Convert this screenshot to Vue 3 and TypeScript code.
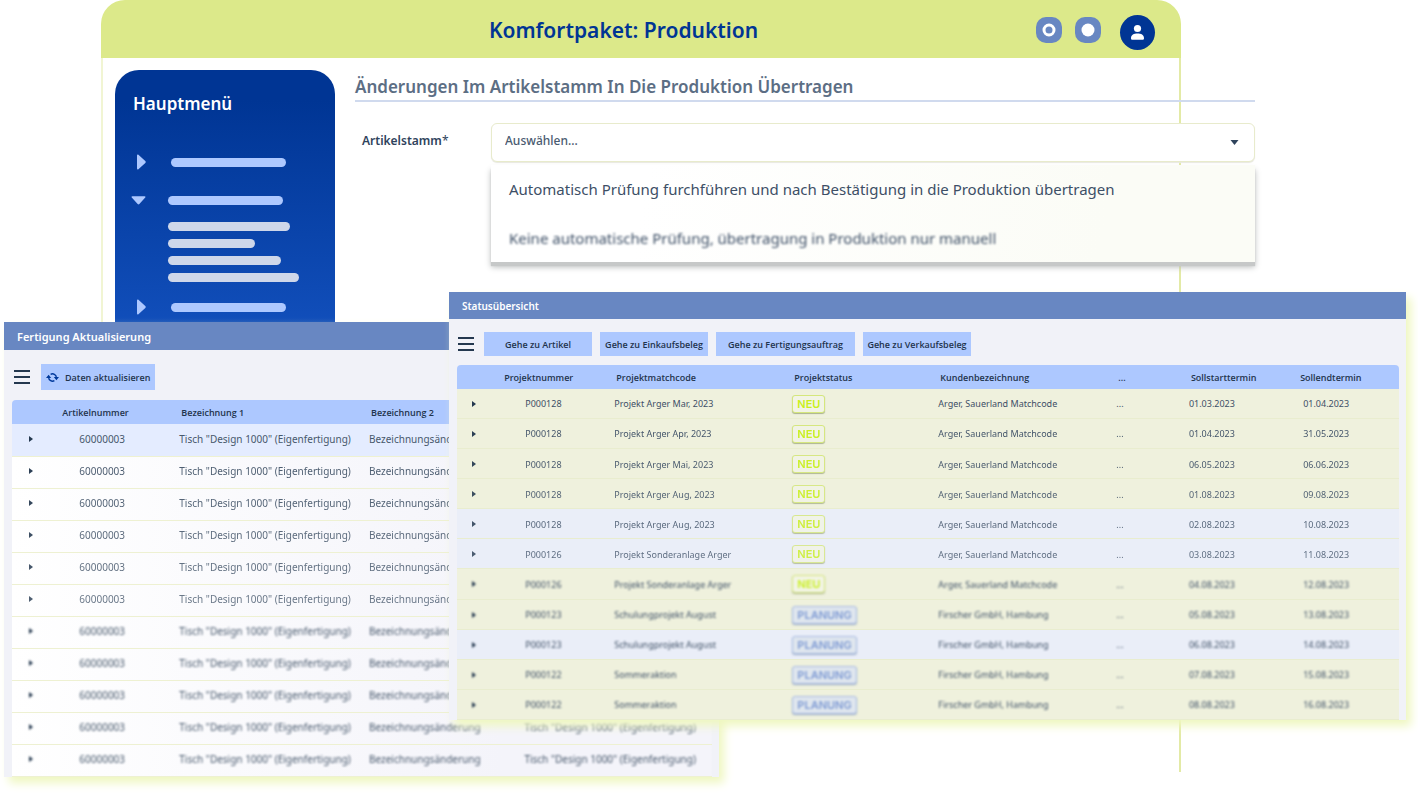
<script setup lang="ts">
import { ref } from 'vue'

interface MenuEntry {
  open: boolean
  children: string[]
}

interface Project {
  nr: string
  name: string
  status: 'NEU' | 'PLANUNG'
  customer: string
  start: string
  end: string
  blue?: boolean
}

const menu: MenuEntry[] = [
  { open: false, children: [] },
  { open: true, children: ['w-l', 'w-s', 'w-m', 'w-xl'] },
  { open: false, children: [] },
]

const options: string[] = [
  'Automatisch Prüfung furchführen und nach Bestätigung in die Produktion übertragen',
  'Keine automatische Prüfung, übertragung in Produktion nur manuell',
]
const selected = ref('')

const articleName = 'Tisch "Design 1000" (Eigenfertigung)'
const articles = Array.from({ length: 11 }, (_, i) => ({
  nr: '60000003',
  name: articleName,
  name2: 'Bezeichnungsänderung',
  parent: i > 8 ? articleName : '',
}))

const arger = 'Arger, Sauerland Matchcode'
const firscher = 'Firscher GmbH, Hambung'
const projects: Project[] = [
  { nr: 'P000128', name: 'Projekt Arger Mar, 2023', status: 'NEU', customer: arger, start: '01.03.2023', end: '01.04.2023' },
  { nr: 'P000128', name: 'Projekt Arger Apr, 2023', status: 'NEU', customer: arger, start: '01.04.2023', end: '31.05.2023' },
  { nr: 'P000128', name: 'Projekt Arger Mai, 2023', status: 'NEU', customer: arger, start: '06.05.2023', end: '06.06.2023' },
  { nr: 'P000128', name: 'Projekt Arger Aug, 2023', status: 'NEU', customer: arger, start: '01.08.2023', end: '09.08.2023' },
  { nr: 'P000128', name: 'Projekt Arger Aug, 2023', status: 'NEU', customer: arger, start: '02.08.2023', end: '10.08.2023', blue: true },
  { nr: 'P000126', name: 'Projekt Sonderanlage Arger', status: 'NEU', customer: arger, start: '03.08.2023', end: '11.08.2023', blue: true },
  { nr: 'P000126', name: 'Projekt Sonderanlage Arger', status: 'NEU', customer: arger, start: '04.08.2023', end: '12.08.2023' },
  { nr: 'P000123', name: 'Schulungprojekt August', status: 'PLANUNG', customer: firscher, start: '05.08.2023', end: '13.08.2023' },
  { nr: 'P000123', name: 'Schulungprojekt August', status: 'PLANUNG', customer: firscher, start: '06.08.2023', end: '14.08.2023', blue: true },
  { nr: 'P000122', name: 'Sommeraktion', status: 'PLANUNG', customer: firscher, start: '07.08.2023', end: '15.08.2023' },
  { nr: 'P000122', name: 'Sommeraktion', status: 'PLANUNG', customer: firscher, start: '08.08.2023', end: '16.08.2023' },
]

const links: string[] = ['Gehe zu Artikel', 'Gehe zu Einkaufsbeleg', 'Gehe zu Fertigungsauftrag', 'Gehe zu Verkaufsbeleg']

// Rows fade out of focus toward the bottom of each list.
const focus = (index: number) => ({
  filter: index < 6 ? 'none' : 'blur(1px)',
  opacity: index < 6 ? 1 - index * 0.04 : 1,
})
</script>

<template>
  <div class="stage">
    <section class="app-frame">
      <header class="app-header">
        <h1>Komfortpaket: Produktion</h1>
        <div class="header-actions">
          <button type="button" class="dot-button">
            <svg viewBox="0 0 26 26"><circle cx="13" cy="13" r="5" fill="none" stroke="#fff" stroke-width="3" /></svg>
          </button>
          <button type="button" class="dot-button">
            <svg viewBox="0 0 26 26"><circle cx="13" cy="13" r="6.5" fill="#fff" /></svg>
          </button>
          <button type="button" class="avatar">
            <svg viewBox="0 0 35 35" fill="#fff">
              <circle cx="17.5" cy="13.5" r="3.6" />
              <path d="M11 23.2c0-3.2 3-4.600 6.500-4.600s6.500 1.400 6.500 4.600c0 1-.6 1.600-1.600 1.600h-9.800c-1 0-1.600-.6-1.600-1.600z" />
            </svg>
          </button>
        </div>
      </header>

      <div class="app-body">
        <nav class="sidebar">
          <h2>Hauptmenü</h2>
          <ul>
            <li v-for="(entry, i) in menu" :key="i" :class="{ open: entry.open }">
              <button type="button" class="menu-row">
                <svg v-if="entry.open" class="tri-down" viewBox="0 0 16 9"><path d="M1.500 0h13c1 0 1.300.8.700 1.400l-6.300 6.900c-.5.6-1.300.6-1.800 0L.800 1.400C.2.800.5 0 1.500 0z" fill="#adc8ff" /></svg>
                <svg v-else class="tri-right" viewBox="0 0 9 16"><path d="M0 1.500v13c0 1 .8 1.300 1.400.7l6.900-6.300c.6-.5.600-1.300 0-1.800L1.400.8C.8.2 0 .5 0 1.500z" fill="#adc8ff" /></svg>
                <span class="pill"></span>
              </button>
              <div v-if="entry.children.length" class="submenu">
                <span v-for="c in entry.children" :key="c" class="subpill" :class="c"></span>
              </div>
            </li>
          </ul>
        </nav>

        <main class="content">
          <h2>Änderungen Im Artikelstamm In Die Produktion Übertragen</h2>
          <div class="field">
            <label for="artikelstamm">Artikelstamm<span>*</span></label>
            <div class="combo">
              <div class="select-wrap">
                <select id="artikelstamm" v-model="selected">
                  <option value="">Auswählen...</option>
                  <option v-for="o in options" :key="o" :value="o">{{ o }}</option>
                </select>
                <svg class="caret" viewBox="0 0 8 5"><path d="M0 0h8L4 5z" fill="#2f435c" /></svg>
              </div>
              <ul class="option-list" role="listbox">
                <li v-for="(o, i) in options" :key="o" role="option" :class="{ soft: i > 0 }" @click="selected = o">{{ o }}</li>
              </ul>
            </div>
          </div>
        </main>
      </div>
    </section>

    <section class="window production">
      <h2 class="titlebar">Fertigung Aktualisierung</h2>
      <div class="toolbar">
        <button type="button" class="burger">
          <svg viewBox="0 0 16 14" stroke="#24384f" stroke-width="2"><path d="M0 1h16M0 7h16M0 13h16" /></svg>
        </button>
        <button type="button" class="tool refresh">
          <svg viewBox="0 0 24 20">
            <path d="M8.500 4.200A7.200 7.200 0 0 1 19.200 10M15.500 15.800A7.200 7.200 0 0 1 4.800 10" fill="none" stroke="#00399b" stroke-width="2.600" />
            <path d="M0 11l4.800-6 4.800 6zM14.400 9h9.600l-4.800 6z" fill="#00399b" />
          </svg>
          Daten aktualisieren
        </button>
      </div>
      <div class="table-box">
        <table class="articles">
          <colgroup><col class="a1" /><col class="a2" /><col class="a3" /><col class="a4" /><col /></colgroup>
          <thead>
            <tr><th></th><th>Artikelnummer</th><th>Bezeichnung 1</th><th>Bezeichnung 2</th><th></th></tr>
          </thead>
          <tbody>
            <tr v-for="(a, i) in articles" :key="i">
              <td class="toggle"><svg :style="focus(i)" viewBox="0 0 4 6"><path d="M0 0l4 3-4 3z" fill="#24384f" /></svg></td>
              <td class="nr"><span :style="focus(i)">{{ a.nr }}</span></td>
              <td><span :style="focus(i)">{{ a.name }}</span></td>
              <td><span :style="focus(i)">{{ a.name2 }}</span></td>
              <td><span :style="focus(i)">{{ a.parent }}</span></td>
            </tr>
          </tbody>
        </table>
      </div>
    </section>

    <section class="window status">
      <h2 class="titlebar">Statusübersicht</h2>
      <div class="toolbar">
        <button type="button" class="burger">
          <svg viewBox="0 0 16 14" stroke="#24384f" stroke-width="2"><path d="M0 1h16M0 7h16M0 13h16" /></svg>
        </button>
        <button v-for="(l, i) in links" :key="l" type="button" class="tool" :class="{ wide: i === 2 }">{{ l }}</button>
      </div>
      <div class="table-box">
        <table class="projects">
          <colgroup>
            <col class="p1" /><col class="p2" /><col class="p3" /><col class="p4" /><col class="p5" /><col class="p6" /><col class="p7" /><col />
          </colgroup>
          <thead>
            <tr>
              <th></th><th>Projektnummer</th><th>Projektmatchcode</th><th>Projektstatus</th>
              <th>Kundenbezeichnung</th><th>...</th><th>Sollstarttermin</th><th>Sollendtermin</th>
            </tr>
          </thead>
          <tbody>
            <tr v-for="(p, i) in projects" :key="i" :class="{ blue: p.blue }">
              <td class="toggle"><svg :style="focus(i)" viewBox="0 0 4 6"><path d="M0 0l4 3-4 3z" fill="#24384f" /></svg></td>
              <td class="nr"><span :style="focus(i)">{{ p.nr }}</span></td>
              <td><span :style="focus(i)">{{ p.name }}</span></td>
              <td><span class="badge" :class="p.status.toLowerCase()" :style="focus(i)">{{ p.status }}</span></td>
              <td><span :style="focus(i)">{{ p.customer }}</span></td>
              <td><span :style="focus(i)">...</span></td>
              <td><span :style="focus(i)">{{ p.start }}</span></td>
              <td class="end"><span :style="focus(i)">{{ p.end }}</span></td>
            </tr>
          </tbody>
        </table>
      </div>
    </section>
  </div>
</template>

<style>
body {
  margin: 0;
  background: #fff;
}
</style>

<style scoped>
.stage {
  position: relative;
  min-height: 100vh;
  overflow: hidden;
  font-family: 'Noto Sans', 'Open Sans', sans-serif;
  color: #2f435c;
}
.stage * {
  box-sizing: border-box;
}
h1, h2, ul {
  margin: 0;
  padding: 0;
  list-style: none;
  font-weight: 600;
}
button {
  padding: 0;
  border: 0;
  background: none;
  font: inherit;
  color: inherit;
  cursor: pointer;
}
svg {
  display: block;
}

/* application frame */
.app-frame {
  position: absolute;
  top: 0;
  bottom: 22px;
  left: 101px;
  right: 237px;
  display: flex;
  flex-direction: column;
}
.app-header {
  display: flex;
  align-items: center;
  height: 58px;
  padding: 0 26px 0 110px;
  border-radius: 24px 24px 0 0;
  background: #dce98a;
}
.app-header h1 {
  flex: 1;
  text-align: center;
  font-size: 21px;
  line-height: 32px;
  padding-top: 2px;
  color: #003594;
}
.header-actions {
  display: flex;
  align-items: center;
  gap: 13px;
  padding-top: 6px;
}
.dot-button {
  width: 26px;
  height: 26px;
  margin-bottom: 4px;
  border-radius: 10px;
  background: #6887c2;
}
.avatar {
  width: 35px;
  height: 35px;
  margin-left: 6px;
  border-radius: 50%;
  background: #003594;
}
.app-body {
  flex: 1;
  display: flex;
  align-items: flex-start;
  gap: 20px;
  padding: 12px 0 0 12px;
  border: solid #e3eaa6;
  border-width: 0 2px;
  border-left-color: #f1f5d3;
}
.sidebar {
  flex: none;
  width: 220px;
  height: 300px;
  padding: 20px 18px;
  border-radius: 24px 24px 0 0;
  background: linear-gradient(#003594 10%, #1250bd 90%);
}
.sidebar h2 {
  font-size: 17px;
  line-height: 28px;
  color: #fff;
  margin-bottom: 36px;
}
.menu-row {
  display: flex;
  align-items: center;
  height: 16px;
  gap: 25px;
  padding-left: 4px;
}
.open .menu-row {
  margin: 22px 0 0 -2px;
  gap: 22px;
  padding-left: 0;
}
.tri-right {
  width: 9px;
  height: 16px;
}
.tri-down {
  width: 15px;
  height: 9px;
}
.pill,
.subpill {
  display: block;
  width: 115px;
  height: 9px;
  border-radius: 5px;
  background: #adc8ff;
}
.submenu {
  display: grid;
  gap: 8px;
  padding: 14px 0 17px 35px;
}
.subpill {
  background: #ced7ea;
}
.w-s { width: 87px; }
.w-m { width: 113px; }
.w-l { width: 122px; }
.w-xl { width: 131px; }

.content {
  flex: 1;
  margin-right: -76px;
}
.content h2 {
  height: 32px;
  font-size: 17px;
  line-height: 33px;
  white-space: nowrap;
  color: #5c6e84;
  border-bottom: 2px solid #d0daee;
}
.field {
  display: flex;
  padding: 21px 0 0 7px;
}
.field label {
  flex: none;
  width: 129px;
  font-size: 12px;
  line-height: 36px;
  font-weight: 600;
}
.field label span {
  font-weight: 400;
}
.combo {
  flex: 1;
}
.select-wrap {
  position: relative;
}
select {
  display: block;
  width: 100%;
  height: 39px;
  padding: 0 13px 4px;
  border: 1px solid #e8ebcc;
  border-radius: 6px;
  appearance: none;
  background: #fff;
  box-shadow: 0 1px 1px #e8e8e0;
  font: 500 12px 'Noto Sans', sans-serif;
  color: #4a5b70;
}
.caret {
  position: absolute;
  right: 16px;
  top: 17px;
  width: 9px;
  height: 5px;
}
.option-list {
  margin-top: 3px;
  height: 97px;
  background: linear-gradient(100deg, #fff 20%, #fbfcf6 80%);
  box-shadow: 0 4px 1px #c6c8c8, 0 5px 6px #b9bcbc;
}
.option-list li {
  height: 49px;
  padding-left: 18px;
  font-size: 15px;
  line-height: 49px;
  font-weight: 400;
  white-space: nowrap;
  color: #3d4f66;
}
.option-list .soft {
  filter: blur(1px);
}

/* windows */
.window {
  position: absolute;
  background: #f1f2f8;
  box-shadow: 5px 6px 9px #eff7c0;
}
.titlebar {
  background: #6887c2;
  color: #fff;
}
.toolbar {
  display: flex;
  align-items: center;
}
.burger {
  width: 16px;
  height: 14px;
}
.tool {
  background: #adc8ff;
  color: #1f344d;
  font-weight: 600;
  font-family: 'Open Sans', 'Noto Sans', sans-serif;
  white-space: nowrap;
}
table {
  width: 100%;
  border-collapse: collapse;
  table-layout: fixed;
}
th,
td {
  padding: 0;
  text-align: left;
  white-space: nowrap;
}
th {
  background: #adc8ff;
  font-weight: 600;
  font-family: 'Open Sans', 'Noto Sans', sans-serif;
  color: #1f344d;
  padding-left: 2px;
}
th:first-child { border-top-left-radius: 4px; }
th:last-child { border-top-right-radius: 4px; }
td span {
  display: inline-block;
}
.toggle svg {
  width: 4px;
  height: 6px;
  margin-left: 17px;
}

.production {
  top: 322px;
  left: 4px;
  right: calc(100% - 719px);
}
.production .titlebar {
  padding: 1px 0 0 13px;
  font-size: 11px;
  line-height: 27px;
}
.production .toolbar {
  height: 50px;
  gap: 11px;
  padding: 4px 0 0 10px;
}
.refresh {
  display: flex;
  align-items: center;
  gap: 6px;
  height: 26px;
  padding: 0 5px;
  font-size: 9px;
}
.refresh svg {
  width: 13px;
  height: 11px;
}
.production .table-box {
  padding: 0 7px 0 8px;
}
.articles {
  font-size: 10px;
}
.articles th {
  height: 24px;
  font-size: 9px;
}
.articles td {
  height: 32px;
  padding-bottom: 2px;
  border-bottom: 1px solid #eef1d2;
  color: #47586c;
}
.articles tbody tr {
  background: linear-gradient(90deg, #fff, #f4f4fa 70%);
}
.articles tbody tr:first-child {
  background: #e4ecff;
}
.articles .nr { padding-left: 19px; }
.a1 { width: 6.9%; }
.a2 { width: 17%; }
.a3 { width: 27.1%; }
.a4 { width: 22.2%; }

.status {
  top: 292px;
  left: 449px;
  right: 12px;
}
.status .titlebar {
  padding: 1px 0 0 13px;
  font-size: 10px;
  line-height: 26px;
}
.status .toolbar {
  height: 46px;
  gap: 8px;
  padding: 4px 0 0 9px;
}
.status .burger {
  margin-right: 2px;
}
.status .tool {
  width: 108px;
  height: 24px;
  font-size: 9px;
}
.status .wide {
  width: 139px;
}
.status .table-box {
  padding: 0 7px 0 8px;
}
.projects {
  height: 355px;
  font-size: 9px;
}
.projects th {
  height: 24px;
  font-size: 9px;
}
.projects td {
  padding-top: 1px;
  border-bottom: 1px solid #e9edcf;
  background: #eff1dd;
  color: #3d4f66;
}
.projects .toggle svg {
  margin-left: 15px;
}
.projects .blue td {
  background: #eaeef8;
}
.projects .nr { padding-left: 23px; }
.projects .end { padding-left: 5px; }
.p1 { width: 4.8%; }
.p2 { width: 11.9%; }
.p3 { width: 18.9%; }
.p4 { width: 15.5%; }
.p5 { width: 18.9%; }
.p6 { width: 7.7%; }
.p7 { width: 11.6%; }
.badge {
  padding: 0 4px;
  border: 1px solid;
  border-radius: 3px;
  font: 600 11px/16px Inter, sans-serif;
  vertical-align: middle;
}
.neu {
  color: #c9f01c;
  border-color: #d5e77c;
  background: #f2f4e6;
  box-shadow: 0 1px 1px #aab38c;
}
.planung {
  color: #7f9bd4;
  border-color: #a9bce2;
  background: #dfe6ee;
  box-shadow: 0 1px 1px #9dadc8;
}
</style>
